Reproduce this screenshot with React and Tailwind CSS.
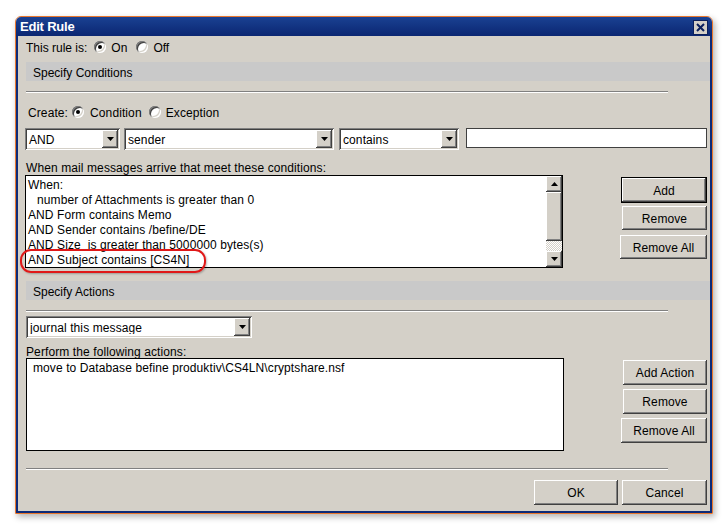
import React from "react";

const RAISED =
  "shadow-[inset_-1px_-1px_#404040,inset_1px_1px_#ffffff,inset_-2px_-2px_#808080,inset_2px_2px_#d4d0c8]";
const SUNKEN =
  "shadow-[inset_1px_1px_#808080,inset_-1px_-1px_#ffffff,inset_2px_2px_#404040,inset_-2px_-2px_#d4d0c8]";

function Btn({ className = "", children, def }) {
  if (def) {
    return (
      <div className={`border border-black bg-[#d4d0c8] ${className}`}>
        <div className={`w-full h-full flex items-center justify-center pt-[1px] ${RAISED}`}>{children}</div>
      </div>
    );
  }
  return (
    <div className={`bg-[#d4d0c8] flex items-center justify-center pt-[1px] ${RAISED} ${className}`}>{children}</div>
  );
}

function Arrow({ up }) {
  return (
    <svg width="7" height="4" viewBox="0 0 7 4">
      {up ? <polygon points="3.5,0 7,4 0,4" fill="#000" /> : <polygon points="0,0 7,0 3.5,4" fill="#000" />}
    </svg>
  );
}

function Select({ className = "", text }) {
  return (
    <div className={`bg-white flex items-center p-[2px] ${SUNKEN} ${className}`}>
      <div className="flex-1 pl-[2px] pt-[2px] whitespace-nowrap overflow-hidden leading-none">{text}</div>
      <div className={`w-[16px] h-full bg-[#d4d0c8] flex items-center justify-center ${RAISED}`}>
        <Arrow />
      </div>
    </div>
  );
}

function Radio({ on, className = "" }) {
  return (
    <div className={`w-[12px] h-[12px] rounded-full bg-white flex items-center justify-center ${SUNKEN} ${className}`}>
      {on && <div className="w-[4px] h-[4px] rounded-full bg-black" />}
    </div>
  );
}

function Sep() {
  return <div className="ml-[8px] w-[642px] h-[2px] border-t border-t-[#808080] border-b border-b-white" />;
}

export default function App() {
  return (
    <div className="w-[728px] h-[531px] bg-white pt-[16px] pl-[15px] font-['Liberation_Sans',Arial,sans-serif] text-[12px] tracking-[0.1px] text-black">
      <div className="w-[698px] h-[498px] rounded-t-[6px] border border-[#e8772e] shadow-[2px_3px_6px_rgba(0,0,0,0.3)] flex flex-col overflow-hidden">
        {/* title bar */}
        <div className="h-[19px] bg-gradient-to-b from-[#1a4192] to-[#0b2672] flex items-center pl-[4px] pr-[4px]">
          <div className="text-white font-bold text-[13px] tracking-[-0.2px] flex-1">Edit Rule</div>
          <div className="w-[15px] h-[15px] border border-[#0a1f5c] bg-[#d4d0c8] flex items-center justify-center mt-[2px]">
            <svg width="9" height="9" viewBox="0 0 9 9">
              <path d="M1 1 L8 8 M8 1 L1 8" stroke="#0a1f5c" strokeWidth="2" />
            </svg>
          </div>
        </div>

        {/* content */}
        <div className="flex-1 bg-[#d4d0c8] border-x-2 border-b-2 border-[#0c2a78] flex flex-col pt-[2px]">
          {/* This rule is */}
          <div className="h-[18px] pl-[8px] flex items-center tracking-normal">
            <span className="pt-[2px]">This rule is:</span>
            <Radio on className="ml-[7px]" />
            <span className="ml-[5px] pt-[2px]">On</span>
            <Radio className="ml-[9px]" />
            <span className="ml-[5px] pt-[2px]">Off</span>
          </div>

          {/* Specify Conditions band */}
          <div className="mt-[6px] ml-[8px] h-[19px] bg-[#c9c9c9] flex items-center pl-[7px] pt-[2px] tracking-normal">
            Specify Conditions
          </div>

          <div className="mt-[10px]">
            <Sep />
          </div>

          {/* Create */}
          <div className="mt-[11px] h-[16px] pl-[10px] flex items-center">
            <span className="pt-[2px]">Create:</span>
            <Radio on className="ml-[4px]" />
            <span className="ml-[6px] pt-[2px]">Condition</span>
            <Radio className="ml-[7px]" />
            <span className="ml-[5px] pt-[2px]">Exception</span>
          </div>

          {/* Dropdowns */}
          <div className="mt-[8px] h-[22px] pl-[7px] flex items-start">
            <Select className="w-[95px] h-[22px]" text="AND" />
            <Select className="ml-[4px] w-[210px] h-[22px]" text="sender" />
            <Select className="ml-[5px] w-[120px] h-[22px]" text="contains" />
            <div className="ml-[7px] w-[241px] h-[20px] bg-white border border-[#404040]" />
          </div>

          {/* label */}
          <div className="mt-[10px] h-[14px] pl-[8px] leading-[14px] pt-[1px]">
            When mail messages arrive that meet these conditions:
          </div>

          {/* list row */}
          <div className="mt-[1px] h-[93px] pl-[7px] pr-[3px] flex">
            <div className="relative w-[538px] h-[93px] bg-white border border-black flex">
              <div className="flex-1 pt-[2px] pl-[2px] leading-[15px] whitespace-nowrap">
                <div>When:</div>
                <div className="pl-[9px]">number of Attachments is greater than 0</div>
                <div>AND Form contains Memo</div>
                <div>AND Sender contains /befine/DE</div>
                <div>AND Size&nbsp; is greater than 5000000 bytes(s)</div>
                <div>AND Subject contains [CS4N]</div>
              </div>
              <div className="w-[16px] h-full flex flex-col">
                <div className={`h-[16px] bg-[#d4d0c8] flex items-center justify-center ${RAISED}`}>
                  <Arrow up />
                </div>
                <div className={`h-[49px] bg-[#d4d0c8] ${RAISED}`} />
                <div className="flex-1 bg-[repeating-conic-gradient(#ffffff_0_25%,#d4d0c8_0_50%)] bg-[length:2px_2px]" />
                <div className={`h-[16px] bg-[#d4d0c8] flex items-center justify-center ${RAISED}`}>
                  <Arrow />
                </div>
              </div>
              <div className="absolute left-[-6px] top-[73px] w-[186px] h-[24px] rounded-[11px] border-2 border-[#e01818] shadow-[1px_1px_2px_rgba(0,0,0,0.25)]" />
            </div>
            <div className="ml-auto pt-[2px] flex flex-col items-end">
              <Btn def className="w-[86px] h-[26px]">Add</Btn>
              <Btn className="mt-[3px] w-[85px] h-[24px]">Remove</Btn>
              <Btn className="mt-[5px] w-[87px] h-[24px]">Remove All</Btn>
            </div>
          </div>

          {/* Specify Actions band */}
          <div className="mt-[13px] ml-[8px] h-[19px] bg-[#c9c9c9] flex items-center pl-[7px] pt-[2px] tracking-normal">
            Specify Actions
          </div>

          <div className="mt-[10px]">
            <Sep />
          </div>

          <div className="mt-[4px] h-[22px] pl-[8px] flex">
            <Select className="w-[226px] h-[22px]" text="journal this message" />
          </div>

          <div className="mt-[6px] h-[14px] pl-[8px] leading-[14px] pt-[1px]">Perform the following actions:</div>

          <div className="h-[93px] pl-[8px] pr-[3px] flex">
            <div className="w-[538px] h-[93px] bg-white border border-black pt-[2px] pl-[6px] leading-[15px] whitespace-nowrap">
              move to Database befine produktiv\CS4LN\cryptshare.nsf
            </div>
            <div className="ml-auto pt-[2px] flex flex-col items-end">
              <Btn className="w-[84px] h-[25px]">Add Action</Btn>
              <Btn className="mt-[4px] w-[84px] h-[25px]">Remove</Btn>
              <Btn className="mt-[4px] w-[86px] h-[25px]">Remove All</Btn>
            </div>
          </div>

          <div className="mt-[17px]">
            <Sep />
          </div>

          <div className="mt-[10px] h-[25px] pr-[3px] flex justify-end">
            <Btn className="w-[84px] h-[25px]">OK</Btn>
            <Btn className="ml-[4px] w-[85px] h-[25px]">Cancel</Btn>
          </div>
        </div>
      </div>
    </div>
  );
}
